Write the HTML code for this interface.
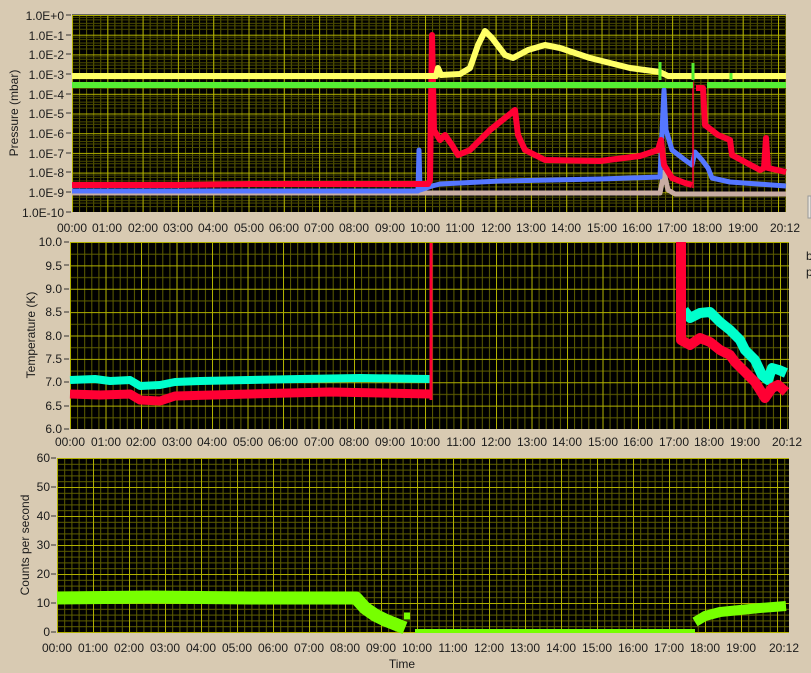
<!DOCTYPE html>
<html><head><meta charset="utf-8"><style>
html,body{margin:0;padding:0;background:#d8cab2;width:811px;height:673px;overflow:hidden}
svg{position:absolute;left:0;top:0}
text{font-family:"Liberation Sans",sans-serif;font-size:12px;fill:#1b1b1b}
</style></head><body>
<svg width="811" height="673" viewBox="0 0 811 673" xmlns="http://www.w3.org/2000/svg">
<defs>
<pattern id="v1" x="72" y="0" width="7.06" height="10" patternUnits="userSpaceOnUse"><rect x="0" y="0" width="1" height="10" fill="#5e5e00"/></pattern>
<pattern id="V1" x="72" y="0" width="35.3" height="10" patternUnits="userSpaceOnUse"><rect x="0" y="0" width="1" height="10" fill="#b0b000"/></pattern>
<pattern id="h1" x="0" y="15" width="10" height="19.7" patternUnits="userSpaceOnUse">
<g fill="#4a4a00"><rect y="1.9" width="10" height="1"/><rect y="4.37" width="10" height="1"/><rect y="7.84" width="10" height="1"/><rect y="10.3" width="10" height="1"/><rect y="13.8" width="10" height="1"/></g>
<rect y="0" width="10" height="1" fill="#b0b000"/></pattern>
<pattern id="v2" x="70" y="0" width="7.1" height="10" patternUnits="userSpaceOnUse"><rect width="1" height="10" fill="#5e5e00"/></pattern>
<pattern id="V2" x="70" y="0" width="35.5" height="10" patternUnits="userSpaceOnUse"><rect width="1" height="10" fill="#b0b000"/></pattern>
<pattern id="h2" x="0" y="242" width="10" height="23.375" patternUnits="userSpaceOnUse"><rect y="11.7" width="10" height="1" fill="#5e5e00"/><rect y="0" width="10" height="1" fill="#b0b000"/></pattern>
<pattern id="v3" x="57" y="0" width="7.2" height="10" patternUnits="userSpaceOnUse"><rect width="1" height="10" fill="#5e5e00"/></pattern>
<pattern id="V3" x="57" y="0" width="36" height="10" patternUnits="userSpaceOnUse"><rect width="1" height="10" fill="#b0b000"/></pattern>
<pattern id="h3" x="0" y="458" width="10" height="5.8" patternUnits="userSpaceOnUse"><rect y="0" width="10" height="1" fill="#5e5e00"/></pattern>
<pattern id="H3" x="0" y="458" width="10" height="29" patternUnits="userSpaceOnUse"><rect y="0" width="10" height="1" fill="#b0b000"/></pattern>
</defs>

<!-- PLOT 1 -->
<rect x="72" y="15" width="714" height="197" fill="#000"/>
<rect x="72" y="15" width="714" height="197" fill="url(#v1)"/>
<rect x="72" y="15" width="714" height="197" fill="url(#h1)"/>
<rect x="72" y="15" width="714" height="197" fill="url(#V1)"/>
<rect x="72" y="14" width="714" height="1" fill="#666"/>
<g stroke-linejoin="round" fill="none">
<path d="M72 193 H660 L664 172 L668 190 L675 194 H786" stroke="#c8aca2" stroke-width="5"/>
<path d="M72 191 H418 L419 150 L420 190 L432 186 L440 184 L500 181 L600 179 L660 177 L663 110 L664 90 L666 130 L672 150 L685 160 L692 165 L695 152 L702 160 L708 168 L712 178 L730 182 L786 186" stroke="#5577ff" stroke-width="5"/>
<path d="M72 185 H180 L250 184 H428 L430 180 L432 35 L434 130 L440 140 L445 135 L452 145 L458 155 L470 150 L490 130 L505 118 L515 110 L518 135 L525 150 L545 160 L600 161 L640 156 L658 150 L661 140 L664 165 L672 178 L685 183 L692 185 M696 88 H703 L705 125 L718 135 L730 140 L732 155 L745 162 L760 170 L764 168 L766 138 L768 168 L786 172" stroke="#ff0033" stroke-width="6"/>
<path d="M693 82 V188" stroke="#ff0033" stroke-width="1.5"/>
<path d="M72 85 H693 M707 85 H786" stroke="#55ee33" stroke-width="6"/>
<path d="M72 76 H436 L438 68 L441 75 L460 74 L470 68 L478 45 L485 31 L492 38 L505 55 L513 58 L528 50 L545 45 L560 48 L590 58 L630 68 L660 72 L668 76 H786" stroke="#ffff66" stroke-width="6"/>
<path d="M660 62 V80 M693 63 V80 M731 73 V80" stroke="#55ee33" stroke-width="3"/>
</g>
<g font-size="12">
<g text-anchor="end">
<text x="64" y="20">1.0E+0</text><text x="64" y="40">1.0E-1</text><text x="64" y="59">1.0E-2</text><text x="64" y="79">1.0E-3</text><text x="64" y="99">1.0E-4</text><text x="64" y="118">1.0E-5</text><text x="64" y="138">1.0E-6</text><text x="64" y="158">1.0E-7</text><text x="64" y="177">1.0E-8</text><text x="64" y="197">1.0E-9</text><text x="64" y="217">1.0E-10</text>
</g>
<g stroke="#333" stroke-width="1"><path d="M66 15H71M66 35H71M66 54H71M66 74H71M66 94H71M66 113H71M66 133H71M66 153H71M66 172H71M66 192H71M66 212H71"/></g>
<text transform="translate(18,113) rotate(-90)" text-anchor="middle" font-size="12">Pressure (mbar)</text>
</g>
<g text-anchor="middle">
<text x="72" y="232">00:00</text><text x="107" y="232">01:00</text><text x="143" y="232">02:00</text><text x="178" y="232">03:00</text><text x="213" y="232">04:00</text><text x="249" y="232">05:00</text><text x="284" y="232">06:00</text><text x="319" y="232">07:00</text><text x="354" y="232">08:00</text><text x="390" y="232">09:00</text><text x="425" y="232">10:00</text><text x="460" y="232">11:00</text><text x="496" y="232">12:00</text><text x="531" y="232">13:00</text><text x="566" y="232">14:00</text><text x="602" y="232">15:00</text><text x="637" y="232">16:00</text><text x="672" y="232">17:00</text><text x="707" y="232">18:00</text><text x="743" y="232">19:00</text><text x="785" y="232">20:12</text>
</g>
<rect x="808" y="196" width="3" height="22" fill="#e8e4dc" stroke="#999" stroke-width="1"/>
<text x="806" y="260" fill="#602020">b</text><text x="806" y="276" fill="#602020">p</text>

<!-- PLOT 2 -->
<rect x="70" y="242" width="719" height="187" fill="#000"/>
<rect x="70" y="242" width="719" height="187" fill="url(#v2)"/>
<rect x="70" y="242" width="719" height="187" fill="url(#h2)"/>
<rect x="70" y="242" width="719" height="187" fill="url(#V2)"/>
<g fill="none" stroke-linejoin="round">
<path d="M70 380 L95 379 L110 381 L130 380 L140 386 L160 385 L175 382 L200 381 L300 379 L360 378 L430 379" stroke="#00ffcc" stroke-width="8"/>
<path d="M70 394 L100 395 L130 394 L140 400 L160 401 L175 396 L250 394 L330 392 L430 394" stroke="#ff0033" stroke-width="9"/>
<path d="M431 243 V400" stroke="#ff0033" stroke-width="3"/>
<path d="M684 310 L690 318 L700 313 L710 312 L720 322 L730 330 L740 340 L745 350 L755 360 L762 375 L768 380 L772 368 L779 370 L786 373" stroke="#00ffcc" stroke-width="10"/>
<path d="M681 242 V340 L690 345 L700 338 L710 342 L720 350 L730 355 L735 362 L745 372 L755 382 L765 398 L772 388 L778 385 L786 392" stroke="#ff0033" stroke-width="10"/>
</g>
<g text-anchor="end">
<text x="62" y="246">10.0</text><text x="62" y="270">9.5</text><text x="62" y="293">9.0</text><text x="62" y="316">8.5</text><text x="62" y="340">8.0</text><text x="62" y="363">7.5</text><text x="62" y="386">7.0</text><text x="62" y="410">6.5</text><text x="62" y="433">6.0</text>
</g>
<path d="M64 242H69M64 265H69M64 289H69M64 312H69M64 336H69M64 359H69M64 382H69M64 406H69M64 429H69" stroke="#333"/>
<text transform="translate(35,335) rotate(-90)" text-anchor="middle">Temperature (K)</text>
<g text-anchor="middle">
<text x="70" y="446">00:00</text><text x="106" y="446">01:00</text><text x="141" y="446">02:00</text><text x="177" y="446">03:00</text><text x="212" y="446">04:00</text><text x="248" y="446">05:00</text><text x="283" y="446">06:00</text><text x="319" y="446">07:00</text><text x="354" y="446">08:00</text><text x="390" y="446">09:00</text><text x="425" y="446">10:00</text><text x="461" y="446">11:00</text><text x="496" y="446">12:00</text><text x="532" y="446">13:00</text><text x="567" y="446">14:00</text><text x="603" y="446">15:00</text><text x="638" y="446">16:00</text><text x="674" y="446">17:00</text><text x="709" y="446">18:00</text><text x="745" y="446">19:00</text><text x="787" y="446">20:12</text>
</g>

<!-- PLOT 3 -->
<rect x="57" y="458" width="732" height="175" fill="#000"/>
<rect x="57" y="458" width="732" height="175" fill="url(#v3)"/>
<rect x="57" y="458" width="732" height="175" fill="url(#h3)"/>
<rect x="57" y="458" width="732" height="175" fill="url(#H3)"/>
<rect x="57" y="458" width="732" height="175" fill="url(#V3)"/>
<g fill="none" stroke="#77ff00" stroke-linejoin="round">
<path d="M57 598 L150 597 L250 598 L356 598 L365 608 L375 615 L385 620 L395 624 L405 628" stroke-width="13"/>
<path d="M404 616 L410 616" stroke-width="7"/>
<path d="M415 631 H695" stroke-width="4"/>
<path d="M695 622 L705 616 L720 612 L740 610 L760 608 L786 606" stroke-width="10"/>
</g>
<g text-anchor="end">
<text x="50" y="462">60</text><text x="50" y="491">50</text><text x="50" y="520">40</text><text x="50" y="549">30</text><text x="50" y="578">20</text><text x="50" y="607">10</text><text x="50" y="636">0</text>
</g>
<path d="M51 458H56M51 487H56M51 516H56M51 545H56M51 574H56M51 603H56M51 632H56" stroke="#333"/>
<text transform="translate(29,545) rotate(-90)" text-anchor="middle">Counts per second</text>
<g text-anchor="middle">
<text x="57" y="652">00:00</text><text x="93" y="652">01:00</text><text x="129" y="652">02:00</text><text x="165" y="652">03:00</text><text x="201" y="652">04:00</text><text x="237" y="652">05:00</text><text x="273" y="652">06:00</text><text x="309" y="652">07:00</text><text x="345" y="652">08:00</text><text x="381" y="652">09:00</text><text x="417" y="652">10:00</text><text x="453" y="652">11:00</text><text x="489" y="652">12:00</text><text x="525" y="652">13:00</text><text x="561" y="652">14:00</text><text x="597" y="652">15:00</text><text x="633" y="652">16:00</text><text x="669" y="652">17:00</text><text x="705" y="652">18:00</text><text x="741" y="652">19:00</text><text x="784" y="652">20:12</text>
</g>
<text x="402" y="668" text-anchor="middle">Time</text>
</svg>
</body></html>
